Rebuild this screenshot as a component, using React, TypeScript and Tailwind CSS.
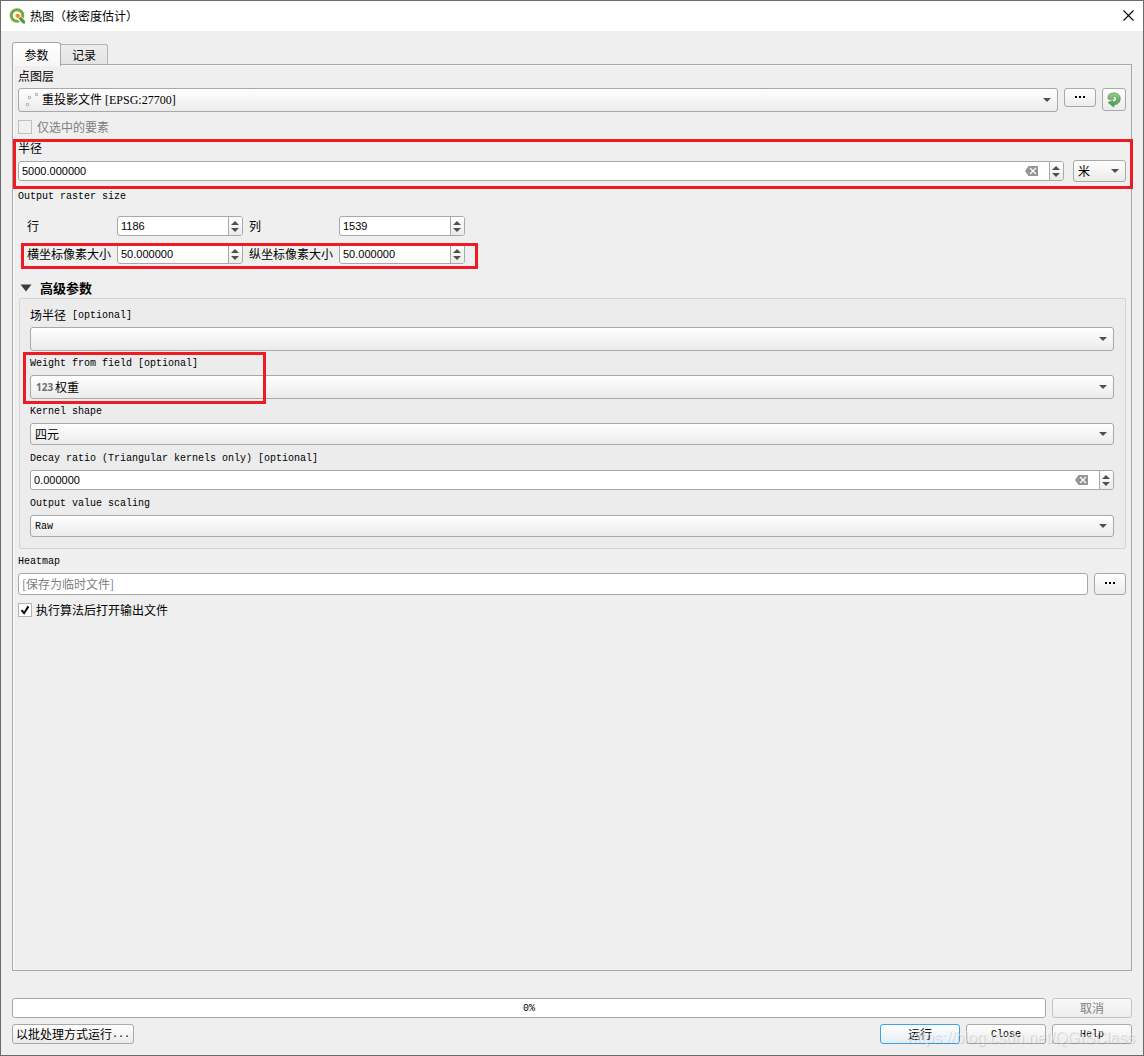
import { useState, type ReactNode } from "react";

const combo =
  "w-full appearance-none rounded-[3px] border border-[#a8a8a8] bg-linear-to-b from-white to-[#ebebeb] text-black outline-none";
const pushButton =
  "flex items-center justify-center rounded-[3px] border border-[#a8a8a8] bg-linear-to-b from-white to-[#ebebeb]";

export default function App() {
  const [open, setOpen] = useState(true);

  return (
    <div className="relative flex min-h-screen flex-col border border-[#6b6b6b] bg-[#efefef] font-['Noto_Sans_CJK_SC',sans-serif] text-xs leading-4 text-black">
      <header className="flex h-[30px] items-center bg-white pb-px pl-2 pr-[9px]">
        <QgisLogo />
        <h1 className="ml-1">热图（核密度估计）</h1>
        <button type="button" aria-label="关闭" className="ml-auto">
          <CloseIcon />
        </button>
      </header>

      <main className="flex flex-1 flex-col px-[11px] pt-[11px] pb-[11px]">
        <div role="tablist" className="flex h-[22px] items-end">
          <button
            type="button"
            role="tab"
            aria-selected="true"
            className="relative -mb-px h-6 w-[49px] shrink-0 self-start rounded-t-[3px] border border-b-0 border-[#a8a8a8] bg-linear-to-b from-white to-[#f6f6f6]"
          >
            参数
          </button>
          <button
            type="button"
            role="tab"
            aria-selected="false"
            className="h-5 w-[47px] rounded-tr-[3px] border border-b-0 border-l-0 border-[#b4b4b4] bg-linear-to-b from-[#ededed] to-[#e4e4e4]"
          >
            记录
          </button>
        </div>

        <section className="flex-1 border border-[#a8a8a8] px-[5px] shadow-[inset_1px_1px_0_#fafafa]">
          <Label htmlFor="layer" className="h-[23px] pb-[2px]">
            点图层
          </Label>
          <div className="flex items-start gap-[6px]">
            <Combo
              id="layer"
              value="重投影文件 [EPSG:27700]"
              className="h-6 pl-[23px] font-['Liberation_Serif','Noto_Sans_CJK_SC',serif]"
              icon={<PointsIcon />}
            />
            <button type="button" aria-label="浏览图层" className={`${pushButton} h-[19px] w-8 shrink-0`}>
              <Dots />
            </button>
            <button type="button" aria-label="迭代" className={`${pushButton} h-[23px] w-6 shrink-0`}>
              <IterateIcon />
            </button>
          </div>
          <label className="flex h-[27px] items-center gap-[5px] pt-[2px] text-[#808080]">
            <input
              type="checkbox"
              disabled
              className="size-[14px] appearance-none border border-[#c0c0c0] bg-[#f0f0f0]"
            />
            仅选中的要素
          </label>

          <div className="relative h-[50px]">
            <Label htmlFor="radius" className="h-[21px] pb-1">
              半径
            </Label>
            <div className="flex items-center gap-[9px]">
              <Spin id="radius" value="5000.000000" clearable />
              <div className="w-[53px] shrink-0">
                <Combo id="unit" label="单位" value="米" className="h-[22px] pl-1" />
              </div>
            </div>
            <Highlight className="inset-y-0 -left-[5px] -right-[7px]" />
          </div>

          <p className="flex h-[13px] items-center">
            <Latin>Output raster size</Latin>
          </p>

          <div className="relative mt-[14px] grid w-[438px] grid-cols-[84px_126px_84px_126px] items-center gap-x-[6px] gap-y-2 pl-[9px]">
            <label htmlFor="rows">行</label>
            <Spin id="rows" value="1186" />
            <label htmlFor="cols">列</label>
            <Spin id="cols" value="1539" />
            <label htmlFor="pixel-x">横坐标像素大小</label>
            <Spin id="pixel-x" value="50.000000" />
            <label htmlFor="pixel-y">纵坐标像素大小</label>
            <Spin id="pixel-y" value="50.000000" />
            <Highlight className="-bottom-[5px] left-[3px] h-[26px] w-[457px]" />
          </div>

          <button
            type="button"
            aria-expanded={open}
            onClick={() => setOpen(!open)}
            className="mt-[14px] flex h-5 items-center gap-2 pl-[2px] text-[13px] font-bold"
          >
            <svg width="12" height="8" viewBox="0 0 12 8" className={open ? "" : "-rotate-90"}>
              <path d="M0.5 0.5h11L6 7.5z" fill="#3c3c3c" />
            </svg>
            高级参数
          </button>

          {open && (
            <div className="ml-px rounded-[2px] border border-[#d4d4d4] bg-[#ececec] pt-1 pr-[11px] pb-[11px] pl-[10px]">
              <Label htmlFor="radius-field">
                场半径<Latin> [optional]</Latin>
              </Label>
              <Combo id="radius-field" value="" className="h-6" />

              <div className="relative">
                <Label htmlFor="weight">
                  <Latin>Weight from field [optional]</Latin>
                </Label>
                <Combo
                  id="weight"
                  value="权重"
                  className="h-6 pl-6"
                  icon={
                    <span className="font-['Open_Sans',sans-serif] text-[10px] leading-3 font-bold text-[#6e6e6e]">
                      123
                    </span>
                  }
                />
                <Highlight className="-bottom-[5px] -left-[7px] h-[52px] w-[243px]" />
              </div>

              <Label htmlFor="kernel">
                <Latin>Kernel shape</Latin>
              </Label>
              <Combo id="kernel" value="四元" className="h-[22px] pl-1" />

              <Label htmlFor="decay" className="h-[25px]">
                <Latin>Decay ratio (Triangular kernels only) [optional]</Latin>
              </Label>
              <Spin id="decay" value="0.000000" clearable />

              <Label htmlFor="scaling" className="h-[25px]">
                <Latin>Output value scaling</Latin>
              </Label>
              <Combo
                id="scaling"
                value="Raw"
                className="h-[22px] pt-px pl-1 font-['Liberation_Mono',monospace] text-[10px]"
              />
            </div>
          )}

          <Label htmlFor="output">
            <Latin>Heatmap</Latin>
          </Label>
          <div className="flex gap-[6px]">
            <input
              id="output"
              type="text"
              placeholder="[保存为临时文件]"
              className="h-[22px] min-w-0 flex-1 rounded-[3px] border border-[#a8a8a8] bg-white px-[3px] pb-px outline-none placeholder:text-[#808080]"
            />
            <button type="button" aria-label="浏览输出" className={`${pushButton} w-8 shrink-0`}>
              <Dots />
            </button>
          </div>
          <label className="flex h-[30px] items-center gap-1">
            <span className="relative flex size-[14px]">
              <input
                type="checkbox"
                defaultChecked
                className="peer size-[14px] appearance-none border border-[#b4b4b4] bg-white"
              />
              <svg
                viewBox="0 0 14 14"
                className="pointer-events-none absolute inset-0 hidden size-[14px] peer-checked:block"
              >
                <path d="M3.5 7.2l2.600 3L10.400 3.400" fill="none" stroke="#000" strokeWidth="2" />
              </svg>
            </span>
            执行算法后打开输出文件
          </label>
        </section>

        <footer className="mt-[27px] flex flex-col gap-[6px]">
          <div className="flex gap-[6px]">
            <div
              role="progressbar"
              aria-valuenow={0}
              className="flex h-5 flex-1 items-center justify-center rounded-[3px] border border-[#a8a8a8] bg-white"
            >
              <Latin>0%</Latin>
            </div>
            <button
              type="button"
              disabled
              className="h-5 w-20 rounded-[3px] border border-[#c4c4c4] bg-linear-to-b from-[#f8f8f8] to-[#ededed] text-[#808080]"
            >
              取消
            </button>
          </div>
          <div className="flex gap-[6px]">
            <button type="button" className={`${pushButton} mr-auto h-5 w-[122px]`}>
              以批处理方式运行<Latin>...</Latin>
            </button>
            <button
              type="button"
              className="flex h-5 w-20 items-center justify-center rounded-[3px] border border-[#3ba3f0] bg-linear-to-b from-white to-[#e4eef5]"
            >
              运行
            </button>
            <button type="button" className={`${pushButton} h-5 w-20`}>
              <Latin>Close</Latin>
            </button>
            <button type="button" className={`${pushButton} h-5 w-20`}>
              <Latin>Help</Latin>
            </button>
          </div>
        </footer>
      </main>

      <span className="pointer-events-none absolute right-2 bottom-[7px] font-['Liberation_Sans',sans-serif] text-base leading-5 text-white/50 [text-shadow:1px_1px_1px_#00000024]">
        https://blog.csdn.net/QGISClass
      </span>
    </div>
  );
}

function Label({
  htmlFor,
  className = "h-6",
  children,
}: {
  htmlFor: string;
  className?: string;
  children: ReactNode;
}) {
  return (
    <label htmlFor={htmlFor} className={`flex items-center whitespace-pre ${className}`}>
      {children}
    </label>
  );
}

function Latin({ children }: { children: ReactNode }) {
  return <span className="pt-[2px] font-['Liberation_Mono',monospace] text-[10px] leading-4">{children}</span>;
}

function Combo({
  id,
  label,
  value,
  className,
  icon,
}: {
  id: string;
  label?: string;
  value: string;
  className: string;
  icon?: ReactNode;
}) {
  return (
    <div className="relative flex min-w-0 flex-1">
      <select id={id} aria-label={label} className={`${combo} ${className}`}>
        <option>{value}</option>
      </select>
      {icon && (
        <span className="pointer-events-none absolute inset-y-0 left-[6px] flex items-center">{icon}</span>
      )}
      <span className="pointer-events-none absolute inset-y-0 right-[7px] flex items-center">
        <svg width="8" height="4" viewBox="0 0 8 4">
          <path d="M0 0h8L4 4z" fill="#505050" />
        </svg>
      </span>
    </div>
  );
}

function Spin({ id, value, clearable }: { id: string; value: string; clearable?: boolean }) {
  return (
    <div className="flex h-5 min-w-0 flex-1 overflow-hidden rounded-[3px] border border-[#a8a8a8] bg-white">
      <input
        id={id}
        type="text"
        defaultValue={value}
        className="min-w-0 flex-1 px-[3px] font-['Liberation_Sans',sans-serif] text-[11px] outline-none"
      />
      {clearable && (
        <button type="button" aria-label="清除" className="mr-[11px]">
          <svg width="13" height="10" viewBox="0 0 13 10">
            <path d="M3.5 0H13v10H3.5L0 5z" fill="#959595" />
            <path d="M5 2l6 6M11 2L5 8" stroke="#fff" strokeWidth="1.2" />
          </svg>
        </button>
      )}
      <div className="flex w-[14px] flex-col items-center justify-center gap-[3px] border-l border-[#a8a8a8] bg-linear-to-b from-white to-[#ebebeb] pr-px">
        <button type="button" aria-label="增加">
          <svg width="8" height="4" viewBox="0 0 8 4" className="block">
            <path d="M0 4h8L4 0z" fill="#505050" />
          </svg>
        </button>
        <button type="button" aria-label="减少">
          <svg width="8" height="4" viewBox="0 0 8 4" className="block">
            <path d="M0 0h8L4 4z" fill="#505050" />
          </svg>
        </button>
      </div>
    </div>
  );
}

function Highlight({ className }: { className: string }) {
  return <div className={`pointer-events-none absolute border-[3px] border-[#ed1c24] ${className}`} />;
}

function Dots() {
  return (
    <svg width="10" height="4" viewBox="0 0 10 4" className="mb-[2px]">
      <path d="M0 1h2v2H0zM4 1h2v2H4zM8 1h2v2H8z" fill="#000" />
    </svg>
  );
}

function PointsIcon() {
  return (
    <svg width="16" height="16" viewBox="0 0 16 16" fill="#fff" stroke="#9a9a9a">
      <circle cx="3.5" cy="12.5" r="1.2" />
      <circle cx="5.5" cy="5.5" r="1.2" />
      <circle cx="12.5" cy="2.5" r="1.2" />
    </svg>
  );
}

function CloseIcon() {
  return (
    <svg width="11" height="11" viewBox="0 0 11 11" stroke="#000" strokeWidth="1.1">
      <path d="M0.5 0.5l10 10M10.5 0.5l-10 10" />
    </svg>
  );
}

function IterateIcon() {
  return (
    <svg width="14" height="16" viewBox="0 0 14 16">
      <defs>
        <linearGradient id="iterate" x1="0" y1="0" x2="0" y2="1">
          <stop offset="0" stopColor="#9bd08c" />
          <stop offset="1" stopColor="#3f9a3f" />
        </linearGradient>
      </defs>
      <path
        d="M1.4 3.2C2.8 1.7 4.8 1 7 1c3.700 0 6.200 2.300 6.200 5.700 0 3.500-2.400 5.600-6 6.100L6.700 15 1.200 10.500 5.500 8.400 6 10c2.200-.2 3.600-1.200 3.600-3.200 0-1.500-1-2.500-2.300-2.500-.9 0-1.500.4-1.900 1l1.800 1.500-4.500.8L1 6.800z"
        fill="url(#iterate)"
        stroke="#3f8f45"
        strokeWidth="0.7"
      />
    </svg>
  );
}

function QgisLogo() {
  return (
    <svg width="17" height="16" viewBox="0 0 17 16">
      <circle cx="8" cy="7.5" r="5.8" fill="none" stroke="#76a83a" strokeWidth="3" />
      <path d="M8.500 8L14.500 14" stroke="#fff" strokeWidth="5" />
      <path d="M9.600 10.800l2.200-2.200 4.200 4.300v2.600h-2.200z" fill="#589632" />
      <path d="M6.600 5.900h3.200l1.700 1.900-2.400 2.500-2.500-1.500z" fill="#ee8a2a" />
    </svg>
  );
}
